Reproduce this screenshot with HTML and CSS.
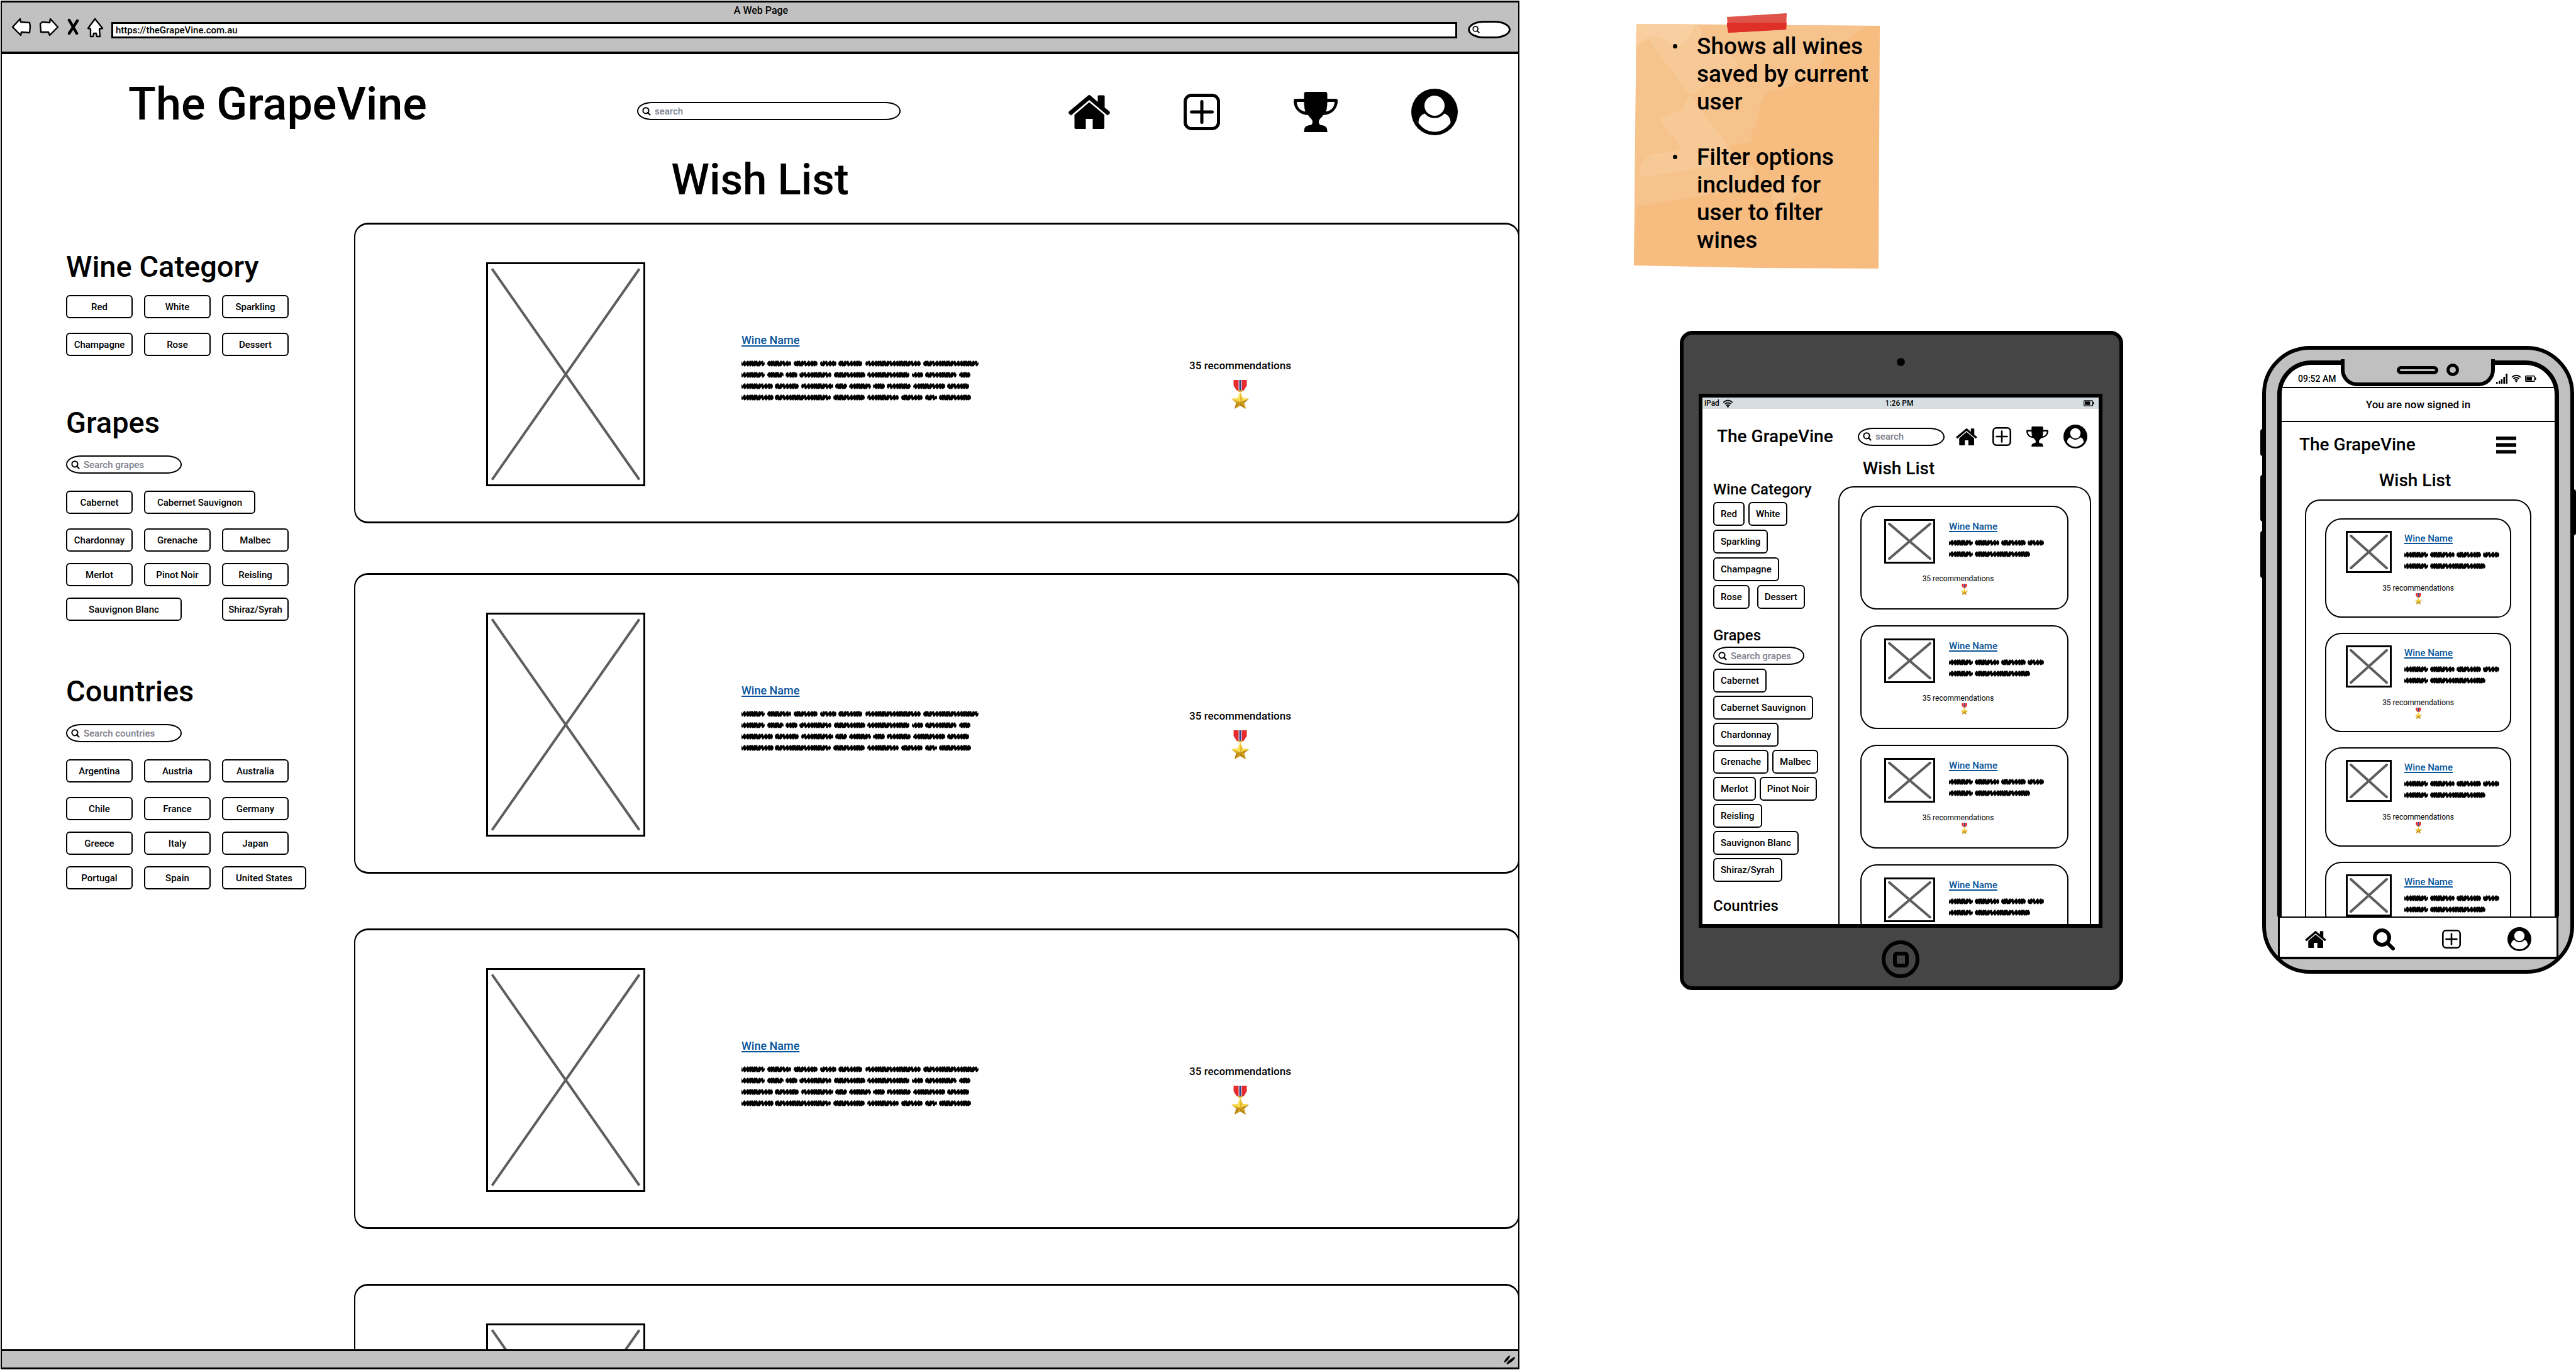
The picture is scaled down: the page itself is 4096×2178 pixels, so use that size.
FILE: index.html
```html
<!DOCTYPE html>
<html lang="en">
<head>
<meta charset="utf-8">
<title>The GrapeVine – Wish List</title>
<link rel="stylesheet" href="styles.css">
</head>
<body>
<svg class="sprite" aria-hidden="true">
  <defs>
    <pattern id="zigzag" width="34" height="18" patternUnits="userSpaceOnUse">
      <path d="M-6 12L-1 6 0 12 5 6 5 12 10 6 10 12 14 6 14 12 17 6 18 12 21 6 21 12 24 6 25 12 29 6 28 12 33 6 34 12 39 6" fill="none" stroke="#000" stroke-width="3.200" stroke-linejoin="round"/>
    </pattern>
    <linearGradient id="gold" x1="0" y1="0" x2="0" y2="1">
      <stop offset="0" stop-color="#f8d23a"/><stop offset="1" stop-color="#c8901a"/>
    </linearGradient>
  </defs>
  <symbol id="home" viewBox="0 0 66 54">
    <path d="M31 1q2-2 4 0l11.500 10V2q0-1.500 1.500-1.500h8q1.500 0 1.500 1.500V20L65 26q2 2 0 4l-3 2.500L33 8 4 32.500 1 30q-2-2 0-4z"/>
    <path d="M33 11.500L57 31.500V52q0 2-2 2H38.500V38h-11v16H11.500q-2 0-2-2V31.500z"/>
  </symbol>
  <symbol id="plus" viewBox="0 0 58 58">
    <rect x="2.500" y="2.500" width="53" height="53" rx="10" fill="none" stroke="#000" stroke-width="5"/>
    <path d="M29 12.500V45.500M12.500 29H45.500" stroke="#000" stroke-width="5" stroke-linecap="round"/>
  </symbol>
  <symbol id="trophy" viewBox="0 0 70 64">
    <path fill-rule="evenodd" d="M20 0H50q3.500 0 3.500 3.500V11H67q3 0 3 3C70 26 62 36 47 37 44 42 40 43 40 48q0 5 5 5 8.500 1 8.500 9v2h-37v-2q0-8 8.500-9 5 0 5-5C30 43 26 42 23 37 8 36 0 26 0 14q0-3 3-3H16.500V3.500Q16.500 0 20 0zM5 16C5 24 10 30 18.500 31.500 17 26 16.500 21 16.500 16zM65 16C65 24 60 30 51.500 31.500 53 26 53.500 21 53.500 16z"/>
  </symbol>
  <symbol id="user" viewBox="0 0 74 74">
    <circle cx="37" cy="37" r="37"/>
    <ellipse cx="37" cy="27" rx="16" ry="16" fill="#fff"/>
    <path fill="#fff" d="M21.500 39.500C14 42 11.500 48 11.500 54.500 18 63.500 27 68.500 37 68.500S56 63.500 62.500 54.500C62.500 48 60 42 52.500 39.500 48 44.500 43 46.800 37 46.800S26 44.500 21.500 39.500z"/>
  </symbol>
  <symbol id="search" viewBox="0 0 35 35">
    <circle cx="14.500" cy="14.500" r="11.500" fill="none" stroke="#000" stroke-width="6"/>
    <path d="M23 23L32 32" stroke="#000" stroke-width="6" stroke-linecap="round"/>
  </symbol>
  <symbol id="lens" viewBox="0 0 14 14">
    <circle cx="6" cy="5.800" r="4.600" fill="none" stroke="#000" stroke-width="2"/>
    <path d="M9 9L12.500 12.500" stroke="#000" stroke-width="2.200" stroke-linecap="round"/>
  </symbol>
  <symbol id="medal" viewBox="0 0 28 46">
    <path fill="#e52b2d" d="M3.500 0h21v9l-5 8h-11l-5-8z"/>
    <path fill="#fff" d="M11.500 0h5v17h-5z"/><path fill="#2b4a94" d="M12.500 0h3v17h-3z"/>
    <path fill="#d9a520" d="M9 16.500h10l-3 2.500h-4z"/>
    <path fill="url(#gold)" d="M14 18.500l4 10.500 10 1-7.500 6.500L23 46l-9-5-9 5 2.500-9.500L0 30l10-1z"/>
    <path fill="#a87412" opacity=".6" d="M14 35L23 46l-9-5zM14 35L5 46l2.500-9.500zM14 35l6.500 1.500L28 30z"/>
    <path fill="#ffe95c" opacity=".8" d="M14 35L0 30l10-1zM14 35l4-6 10 1zM14 18.500V35l-4-6z"/>
  </symbol>
  <symbol id="wifi" viewBox="0 0 18 14">
    <path d="M1 5.200Q9-2 17 5.200M3.800 8Q9 3.200 14.200 8M6.300 10.600Q9 8.200 11.700 10.600" fill="none" stroke="#000" stroke-width="2"/>
    <circle cx="9" cy="12.500" r="1.500"/>
  </symbol>
  <symbol id="battery" viewBox="0 0 18 10">
    <rect x=".7" y=".7" width="14.600" height="8.600" rx="1.200" fill="none" stroke="#000" stroke-width="1.400"/>
    <path d="M2.200 2.200h8.800v5.600H2.200zM15.500 2.500l2 1v3l-2 1z"/>
  </symbol>
  <symbol id="signal" viewBox="0 0 18 16">
    <path d="M0 13h2.500v3H0zM4 11.500h2.500V16H4zM7.700 9h2.500v7H7.700zM11.400 5h2.600v11h-2.600zM15.300 0H18v16h-2.700z"/>
  </symbol>
  <symbol id="cross" viewBox="0 0 100 100" preserveAspectRatio="none">
    <path d="M1 1L99 99M99 1L1 99" stroke="#5e5e5e" stroke-width="4" vector-effect="non-scaling-stroke"/>
  </symbol>
  <symbol id="blurb" viewBox="0 0 384 72">
    <path d="M4 9H32M46 9H74M88 9H116M130 9H146M159 9H187M202 9H280M294 9H372
             M4 27H32M46 27H62M75 27H84M97 27H138M152 27H192M205 27H262M276 27H284M297 27H337M351 27H359
             M4 45H45M58 45H86M100 45H141M154 45H163M176 45H201M214 45H223M236 45H264M278 45H319M332 45H357
             M4 63H46M58 63H137M151 63H191M205 63H245M259 63H283M297 63H306M319 63H360" fill="none" stroke="url(#zigzag)" stroke-width="10" stroke-linecap="round"/>
  </symbol>
  <symbol id="blurb-short" viewBox="0 0 154 36">
    <path d="M4 9H33M46 9H75M88 9H117M130 9H146M4 27H33M46 27H124" fill="none" stroke="url(#zigzag)" stroke-width="10" stroke-linecap="round"/>
  </symbol>
</svg>

<div class="board">

  <section class="window">
    <header class="chrome">
      <p class="chrome-title">A Web Page</p>
      <div class="toolbar">
        <svg width="32" height="30" viewBox="0 0 32 30"><path d="M2 15L14 2 15 7 29 8 30 14 29 24 16 23 15 28z" fill="#fff" stroke="#000" stroke-width="2.400" stroke-linejoin="round"/></svg>
        <svg width="32" height="30" viewBox="0 0 32 30"><path d="M30 15L18 2 17 8 5 7 2 10 3 23 15 23 17 28z" fill="#fff" stroke="#000" stroke-width="2.400" stroke-linejoin="round"/></svg>
        <svg width="20" height="30" viewBox="0 0 20 30"><path d="M4 4L16 25M17 5L4 25" stroke="#000" stroke-width="4.500" stroke-linecap="round"/></svg>
        <svg width="27" height="32" viewBox="0 0 27 32"><path d="M13 2L25 17 20 18 21 30 16 30 15 25 11 25 10 30 6 30 6 18 2 17z" fill="#fff" stroke="#000" stroke-width="2.400" stroke-linejoin="round"/></svg>
        <input class="url" type="text" value="https://theGrapeVine.com.au" aria-label="Address">
        <label class="quick"><svg width="12" height="12"><use href="#lens"/></svg><input type="search" aria-label="Quick search"></label>
      </div>
    </header>

    <div class="page">
      <header class="site-header">
        <a class="brand" href="#">The GrapeVine</a>
        <label class="search"><svg><use href="#lens"/></svg><input type="search" placeholder="search" aria-label="Search"></label>
        <nav class="site-nav">
          <a href="#" aria-label="Home"><svg width="66" height="54"><use href="#home"/></svg></a>
          <a href="#" aria-label="Add"><svg width="58" height="58"><use href="#plus"/></svg></a>
          <a href="#" aria-label="Top wines"><svg width="70" height="64"><use href="#trophy"/></svg></a>
          <a href="#" aria-label="Account"><svg width="74" height="74"><use href="#user"/></svg></a>
        </nav>
      </header>
      <h1>Wish List</h1>
      <div class="columns">
        <aside class="filters">
          <h2>Wine Category</h2>
          <div class="chip-grid">
            <button class="chip">Red</button><button class="chip">White</button><button class="chip">Sparkling</button>
            <button class="chip">Champagne</button><button class="chip">Rose</button><button class="chip">Dessert</button>
          </div>
          <h2 class="h-grapes">Grapes</h2>
          <label class="search"><svg><use href="#lens"/></svg><input type="search" placeholder="Search grapes" aria-label="Search grapes"></label>
          <div class="chip-grid">
            <button class="chip">Cabernet</button><button class="chip chip-l">Cabernet Sauvignon</button>
            <button class="chip">Chardonnay</button><button class="chip">Grenache</button><button class="chip">Malbec</button>
            <button class="chip">Merlot</button><button class="chip">Pinot Noir</button><button class="chip">Reisling</button>
            <button class="chip chip-xl">Sauvignon Blanc</button><button class="chip">Shiraz/Syrah</button>
          </div>
          <h2 class="h-countries">Countries</h2>
          <label class="search"><svg><use href="#lens"/></svg><input type="search" placeholder="Search countries" aria-label="Search countries"></label>
          <div class="chip-grid">
            <button class="chip">Argentina</button><button class="chip">Austria</button><button class="chip">Australia</button>
            <button class="chip">Chile</button><button class="chip">France</button><button class="chip">Germany</button>
            <button class="chip">Greece</button><button class="chip">Italy</button><button class="chip">Japan</button>
            <button class="chip">Portugal</button><button class="chip">Spain</button><button class="chip chip-m">United States</button>
          </div>
        </aside>
        <main class="wines">
          <article class="wine">
            <svg class="photo"><use href="#cross"/></svg>
            <div class="details"><a href="#">Wine Name</a><svg class="blurb"><use href="#blurb"/></svg></div>
            <div class="votes"><p>35 recommendations</p><svg class="medal"><use href="#medal"/></svg></div>
          </article>
          <article class="wine">
            <svg class="photo"><use href="#cross"/></svg>
            <div class="details"><a href="#">Wine Name</a><svg class="blurb"><use href="#blurb"/></svg></div>
            <div class="votes"><p>35 recommendations</p><svg class="medal"><use href="#medal"/></svg></div>
          </article>
          <article class="wine">
            <svg class="photo"><use href="#cross"/></svg>
            <div class="details"><a href="#">Wine Name</a><svg class="blurb"><use href="#blurb"/></svg></div>
            <div class="votes"><p>35 recommendations</p><svg class="medal"><use href="#medal"/></svg></div>
          </article>
          <article class="wine">
            <svg class="photo"><use href="#cross"/></svg>
          </article>
        </main>
      </div>
    </div>
    <footer class="grip"><svg width="24" height="18" viewBox="0 0 24 18"><path d="M2.500 13Q4 9 10 4 8 10 2.500 13zM6.500 16Q9 11 18 6.500 15 12 6.500 16z" stroke="#000" stroke-width="2" stroke-linejoin="round"/></svg></footer>
  </section>

  <div class="side">
    <aside class="note">
      <svg class="paper" viewBox="0 0 391 406">
        <path fill="#f6bc80" d="M4 17L391 20 389 406 200 405 0 401z"/>
        <path fill="#f7c48f" d="M4 17L368 20C358 30 340 36 339 46 330 52 306 60 300 75 290 95 262 118 218 123 190 140 205 172 188 187 184 197 188 205 188 205 170 206 145 210 142 217 144 227 170 230 190 245 196 258 188 262 182 264 186 272 178 278 174 280L4 307 0 401z" opacity=".85"/>
        <path fill="#f8ce9f" d="M4 17L100 18C110 26 108 34 108 36 112 60 164 58 165 82 165 92 128 88 118 108 100 132 82 124 82 148 80 158 42 160 42 172 50 186 74 204 74 214 68 224 40 220 28 224 6 240 6 258 14 258 40 262 100 242 172 241 190 252 192 260L4 290z" opacity=".55"/>
        <path fill="#fad4aa" d="M4 17L96 18C90 34 82 54 66 52 52 46 40 34 30 37 20 38 10 50 4 52z" opacity=".6"/>
        <path fill="#f8c793" d="M232 260C250 252 268 262 268 274 266 290 246 296 236 315 224 318 218 300 220 282 222 270 224 264 232 260z" opacity=".7"/>
        <path fill="#df544a" d="M148 6L243 0 242 26 150 31z"/>
        <path fill="#de3027" d="M148 15H243L242 26 150 31 148 20z"/>
      </svg>
      <ul>
        <li>Shows all wines<br>saved by current<br>user</li>
        <li>Filter options<br>included for<br>user to filter<br>wines</li>
      </ul>
    </aside>

    <div class="devices">
      <section class="tablet">
        <div class="camera"></div>
        <div class="tablet-screen">
          <div class="tablet-status">
            <span>iPad <svg width="17" height="13"><use href="#wifi"/></svg></span>
            <span>1:26 PM</span>
            <span><svg width="17" height="10"><use href="#battery"/></svg></span>
          </div>
          <header class="tablet-header">
            <a class="brand" href="#">The GrapeVine</a>
            <label class="search"><svg><use href="#lens"/></svg><input type="search" placeholder="search" aria-label="Search"></label>
            <nav>
              <a href="#" aria-label="Home"><svg width="34" height="27"><use href="#home"/></svg></a>
              <a href="#" aria-label="Add"><svg width="30" height="30"><use href="#plus"/></svg></a>
              <a href="#" aria-label="Top wines"><svg width="35" height="32"><use href="#trophy"/></svg></a>
              <a href="#" aria-label="Account"><svg width="38" height="38"><use href="#user"/></svg></a>
            </nav>
          </header>
          <h2>Wish List</h2>
          <div class="tablet-columns">
            <aside class="tablet-filters">
              <h3>Wine Category</h3>
              <div class="chip-rows chip-rows-loose">
                <div><button class="chip">Red</button><button class="chip">White</button></div>
                <div><button class="chip">Sparkling</button></div>
                <div><button class="chip">Champagne</button></div>
                <div><button class="chip">Rose</button><button class="chip">Dessert</button></div>
              </div>
              <h3 class="h-grapes">Grapes</h3>
              <label class="search"><svg><use href="#lens"/></svg><input type="search" placeholder="Search grapes" aria-label="Search grapes"></label>
              <div class="chip-rows">
                <div><button class="chip">Cabernet</button></div>
                <div><button class="chip">Cabernet Sauvignon</button></div>
                <div><button class="chip">Chardonnay</button></div>
                <div><button class="chip">Grenache</button><button class="chip">Malbec</button></div>
                <div><button class="chip">Merlot</button><button class="chip">Pinot Noir</button></div>
                <div><button class="chip">Reisling</button></div>
                <div><button class="chip">Sauvignon Blanc</button></div>
                <div><button class="chip">Shiraz/Syrah</button></div>
              </div>
              <h3 class="h-countries">Countries</h3>
            </aside>
            <main class="stack">
              <article class="tile"><svg class="thumb"><use href="#cross"/></svg><div class="info"><a href="#">Wine Name</a><svg class="blurb-short"><use href="#blurb-short"/></svg></div><div class="tally"><p>35 recommendations</p><svg class="medal-small"><use href="#medal"/></svg></div></article>
              <article class="tile"><svg class="thumb"><use href="#cross"/></svg><div class="info"><a href="#">Wine Name</a><svg class="blurb-short"><use href="#blurb-short"/></svg></div><div class="tally"><p>35 recommendations</p><svg class="medal-small"><use href="#medal"/></svg></div></article>
              <article class="tile"><svg class="thumb"><use href="#cross"/></svg><div class="info"><a href="#">Wine Name</a><svg class="blurb-short"><use href="#blurb-short"/></svg></div><div class="tally"><p>35 recommendations</p><svg class="medal-small"><use href="#medal"/></svg></div></article>
              <article class="tile"><svg class="thumb"><use href="#cross"/></svg><div class="info"><a href="#">Wine Name</a><svg class="blurb-short"><use href="#blurb-short"/></svg></div></article>
            </main>
          </div>
        </div>
        <button class="home-key" aria-label="Home"></button>
      </section>

      <section class="phone">
        <i class="key key-mute"></i><i class="key key-up"></i><i class="key key-down"></i><i class="key key-power"></i>
        <div class="notch"><span class="speaker"></span><span class="lens"></span></div>
        <div class="phone-screen">
          <div class="phone-status">
            <span>09:52 AM</span>
            <span class="phone-signals"><svg width="18" height="16"><use href="#signal"/></svg><svg width="16" height="13"><use href="#wifi"/></svg><svg width="18" height="10"><use href="#battery"/></svg></span>
          </div>
          <p class="flash">You are now signed in</p>
          <header class="phone-header">
            <a class="brand" href="#">The GrapeVine</a>
            <button class="menu" aria-label="Menu"><svg width="32" height="27" viewBox="0 0 32 27"><path d="M0 0h32v5H0zM0 11h32v5H0zM0 22h32v5H0z" stroke="#000" stroke-linejoin="round"/></svg></button>
          </header>
          <h2>Wish List</h2>
          <main class="stack">
            <article class="tile"><svg class="thumb"><use href="#cross"/></svg><div class="info"><a href="#">Wine Name</a><svg class="blurb-short"><use href="#blurb-short"/></svg></div><div class="tally"><p>35 recommendations</p><svg class="medal-small"><use href="#medal"/></svg></div></article>
            <article class="tile"><svg class="thumb"><use href="#cross"/></svg><div class="info"><a href="#">Wine Name</a><svg class="blurb-short"><use href="#blurb-short"/></svg></div><div class="tally"><p>35 recommendations</p><svg class="medal-small"><use href="#medal"/></svg></div></article>
            <article class="tile"><svg class="thumb"><use href="#cross"/></svg><div class="info"><a href="#">Wine Name</a><svg class="blurb-short"><use href="#blurb-short"/></svg></div><div class="tally"><p>35 recommendations</p><svg class="medal-small"><use href="#medal"/></svg></div></article>
            <article class="tile"><svg class="thumb"><use href="#cross"/></svg><div class="info"><a href="#">Wine Name</a><svg class="blurb-short"><use href="#blurb-short"/></svg></div></article>
          </main>
        </div>
        <nav class="tabs">
          <a href="#" aria-label="Home"><svg width="34" height="27"><use href="#home"/></svg></a>
          <a href="#" aria-label="Search"><svg width="35" height="35"><use href="#search"/></svg></a>
          <a href="#" aria-label="Add"><svg width="30" height="30"><use href="#plus"/></svg></a>
          <a href="#" aria-label="Account"><svg width="38" height="38"><use href="#user"/></svg></a>
        </nav>
      </section>
    </div>
  </div>
</div>
</body>
</html>
```

FILE: styles.css
```css
*, *::before, *::after { box-sizing: border-box; }

body {
  margin: 0;
  background: #fff;
  color: #000;
  font-family: Roboto, "Noto Sans", sans-serif;
  font-size: 15px;
  font-weight: 500;
}

h1, h2, h3, p, ul { margin: 0; padding: 0; font-weight: 500; }
svg { display: block; flex: none; }
a { color: inherit; text-decoration: none; }
button, input { font: inherit; color: inherit; }
input { min-width: 0; border: 0; outline: 0; padding: 0; background: none; appearance: none; }
input::placeholder { color: #80808c; opacity: 1; }
.sprite { position: absolute; width: 0; height: 0; }

.board {
  display: grid;
  grid-template-columns: minmax(0, 1fr) 1680px;
  height: 100vh;
  overflow: hidden;
}

/* Shared controls */
.chip {
  height: 37px;
  padding: 0 10px;
  border: 2px solid #000;
  border-radius: 6px;
  background: #fff;
  font-size: 15px;
  line-height: 20px;
  white-space: nowrap;
}
.search {
  display: flex;
  align-items: center;
  gap: 6px;
  height: 29px;
  padding: 0 4px 0 6px;
  border: 2px solid #000;
  border-radius: 24px / 14px;
  background: #fff;
}
.search svg { width: 14px; height: 14px; }
.search input { flex: 1; height: 20px; }

/* Desktop browser */
.window {
  display: flex;
  flex-direction: column;
  min-height: 0;
  margin: 1px 0 1px 1px;
  border: 2px solid #000;
  border-width: 3px 2px;
}
.chrome {
  padding: 2px 12px 21px 15px;
  border-bottom: 4px solid #000;
  background: #c1c1c1;
}
.chrome-title { text-align: center; font-size: 16px; line-height: 22px; }
.toolbar { display: flex; align-items: flex-start; gap: 12px; height: 33px; }
.url {
  flex: 1;
  height: 26px;
  margin-top: 7px;
  padding: 0 4px;
  border: 3px solid #000;
  background: #fff;
}
.quick {
  display: flex;
  align-items: center;
  width: 68px;
  height: 28px;
  margin: 5px 0 0 5px;
  padding-left: 4px;
  border: 3px solid #000;
  border-radius: 26px / 14px;
  background: #fff;
}
.quick input { width: 30px; }

.page { flex: 1; min-height: 0; overflow-y: clip; }
.site-header {
  display: flex;
  align-items: flex-end;
  height: 129px;
  padding: 42px 96px 0 201px;
}
.brand { white-space: nowrap; }
.site-header .brand {
  flex: 0 0 809px;
  align-self: flex-start;
  font-size: 72px;
  line-height: 75px;
}
.site-header .search { width: 419px; margin-bottom: 24px; }
.site-nav {
  display: flex;
  align-items: center;
  gap: 117px;
  height: 74px;
  margin-left: auto;
}
h1 {
  margin: 34px 0 33px;
  text-align: center;
  font-size: 69px;
  line-height: 74px;
  height: 72px;
}
.columns { display: grid; grid-template-columns: 458px minmax(0, 1fr); padding-left: 102px; }

.filters { padding-top: 42px; }
.filters h2 { font-size: 47px; line-height: 56px; margin-bottom: 17px; }
.filters .h-grapes { margin: 78px 0 24px; }
.filters .h-countries { margin: 84px 0 24px; }
.filters .search { width: 184px; margin-bottom: 27px; }
.chip-grid {
  display: grid;
  grid-template-columns: repeat(3, 106px);
  grid-template-rows: 42px;
  grid-auto-rows: 37px;
  gap: 18px;
}
.chip-grid .chip { padding: 0; }
.chip-grid .chip-l { grid-column: span 2; width: 177px; }
.chip-grid .chip-xl { grid-column: span 2; width: 184px; }
.chip-grid .chip-m { width: 134px; }

.wines { margin-right: -2px; }
.wine {
  display: grid;
  grid-template-columns: 253px 384px minmax(0, 1fr);
  column-gap: 153px;
  margin-bottom: 87px;
  padding: 60px 186px 56px 208px;
  border: 3px solid #000;
  border-width: 3px 2px;
  border-radius: 22px;
  background: #fff;
}
.wine:first-child { margin-bottom: 79px; }
.photo { width: 253px; height: 356px; padding: 4px; border: 3px solid #000; }
.details { padding-top: 112px; }
.details a, .info a { color: #07549a; text-decoration: underline; text-decoration-thickness: 2px; text-underline-offset: 2px; }
.details a { display: block; font-size: 18px; line-height: 24px; margin-bottom: 16px; }
.blurb { width: 384px; height: 72px; }
.votes { padding-top: 152px; text-align: center; font-size: 17px; line-height: 24px; }
.medal { width: 28px; height: 46px; margin: 11px auto 0; }

.grip {
  display: flex;
  justify-content: flex-end;
  align-items: center;
  height: 29px;
  border-top: 3px solid #000;
  background: #c1c1c1;
}

/* Sticky note */
.side { display: flex; flex-direction: column; }
.note {
  position: relative;
  width: 391px;
  height: 406px;
  margin: 21px 0 0 182px;
}
.paper { position: absolute; inset: 0; width: 100%; height: 100%; }
.note ul { position: relative; padding: 31px 0 0 100px; font-size: 37px; line-height: 44px; list-style: none; white-space: nowrap; }
.note li + li { margin-top: 44px; }
.note li::before {
  content: "";
  position: absolute;
  left: 62px;
  width: 7px;
  height: 7px;
  margin-top: 18px;
  border-radius: 50%;
  background: #000;
}

.devices { display: flex; align-items: flex-start; justify-content: space-between; margin: 99px 3px 0 255px; }

/* Wine tiles on the small screens */
.stack {
  display: flex;
  flex-direction: column;
  border: 2px solid #000;
  border-bottom: 0;
  border-radius: 24px 26px 0 0;
}
.tile {
  display: grid;
  border: 2px solid #000;
  border-radius: 26px 24px 22px 26px;
}
.thumb { width: 100%; height: 100%; padding: 3px; border: 3px solid #000; }
.info { padding-top: 2px; }
.info a { display: block; font-size: 15px; line-height: 20px; }
.blurb-short { width: 154px; height: 36px; margin-top: 7px; }
.tally { grid-column: 1 / -1; text-align: center; font-size: 12px; font-weight: 400; line-height: 16px; padding-top: 16px; }
.tally p { font-weight: 400; }
.medal-small { width: 11px; height: 18px; margin: 0 auto; }

/* Tablet */
.tablet {
  display: flex;
  flex-direction: column;
  width: 705px;
  height: 1048px;
  padding: 0 27px 0 24px;
  border: 6px solid #000;
  border-radius: 20px;
  background: #454545;
}
.camera { width: 13px; height: 13px; margin: 37px auto 44px; border-radius: 50%; background: #000; }
.tablet-screen {
  height: 849px;
  border: 6px solid #000;
  background: #fff;
  overflow: hidden;
}
.tablet-status {
  display: grid;
  grid-template-columns: 1fr auto 1fr;
  align-items: center;
  height: 18px;
  padding: 0 7px 0 3px;
  background: #d6dee1;
  font-size: 12px;
  line-height: 16px;
}
.tablet-status span { display: flex; align-items: center; gap: 5px; }
.tablet-status span:last-child { justify-content: flex-end; }
.tablet-header {
  display: flex;
  align-items: center;
  height: 63px;
  padding: 25px 18px 0 23px;
}
.tablet-header .brand { flex: 0 0 224px; font-size: 28px; line-height: 34px; }
.tablet-header .search { width: 138px; }
.tablet-header nav { display: flex; align-items: center; gap: 24px; margin-left: auto; }
.tablet-screen h2, .phone-screen h2 { text-align: center; font-size: 28px; line-height: 32px; }
.tablet-screen h2 { margin: 16px 6px 3px 0; }
.tablet-columns { display: grid; grid-template-columns: 199px minmax(0, 1fr); padding: 0 12px 0 17px; }
.tablet-filters h3 { font-size: 24px; line-height: 28px; margin-bottom: 6px; }
.tablet-filters .h-grapes { margin: 28px 0 4px; }
.tablet-filters .h-countries { margin-top: 24px; }
.tablet-filters .search { width: 145px; margin-bottom: 6px; }
.chip-rows { display: flex; flex-direction: column; gap: 5px; }
.chip-rows-loose { gap: 6px; }
.chip-rows > div { display: flex; gap: 6px; }
.chip-rows .chip { height: 38px; }
.chip-rows-loose > div:last-child { gap: 12px; }
.tablet .stack { margin-top: 9px; padding: 29px 34px 0 33px; gap: 25px; height: 900px; }
.tablet .tile { grid-template-columns: 81px 1fr; grid-template-rows: 71px; column-gap: 22px; padding: 19px 0 21px 36px; }
.tablet .tally { margin-right: 36px; }
.tablet .tally p { padding-right: 20px; }
.home-key {
  display: grid;
  place-items: center;
  width: 60px;
  height: 60px;
  margin: 20px auto 0;
  padding: 0;
  border: 6px solid #000;
  border-radius: 50%;
  background: none;
}
.home-key::before { content: ""; width: 25px; height: 25px; border: 6px solid #000; border-radius: 6px; }

/* Phone */
.phone {
  position: relative;
  width: 496px;
  margin-top: 24px;
  padding: 17px 18px;
  border: 6px solid #000;
  border-radius: 76px;
  background: #c0c0c0;
}
.key { position: absolute; left: -9px; width: 8px; border-radius: 4px 0 0 4px; background: #000; }
.key-mute { top: 126px; height: 43px; }
.key-up { top: 199px; height: 74px; }
.key-down { top: 288px; height: 75px; }
.key-power { left: auto; right: -9px; top: 222px; height: 73px; border-radius: 0 4px 4px 0; }
.notch {
  position: absolute;
  top: 15px;
  left: 119px;
  z-index: 1;
  display: flex;
  justify-content: flex-end;
  gap: 13px;
  width: 245px;
  height: 43px;
  padding: 11px 51px 0 0;
  border: 6px solid #000;
  border-top: 0;
  border-radius: 0 0 26px 26px;
  background: #c0c0c0;
}
.speaker { width: 66px; height: 13px; border: 5px solid #000; border-radius: 7px; }
.lens { width: 20px; height: 20px; margin-top: -4px; border: 5px solid #000; border-radius: 50%; }
.phone-screen {
  height: 884px;
  border: 7px solid #000;
  border-bottom: 0;
  border-radius: 54px 54px 0 0;
  background: #fff;
  overflow: hidden;
}
.phone-status {
  display: flex;
  align-items: center;
  justify-content: space-between;
  height: 35px;
  padding: 8px 29px 0 26px;
  font-size: 14px;
  line-height: 16px;
}
.phone-signals { display: flex; align-items: center; gap: 6px; }
.flash {
  border: solid #000;
  border-width: 2px 0;
  text-align: center;
  font-size: 17px;
  line-height: 52px;
}
.phone-header {
  display: flex;
  align-items: center;
  justify-content: space-between;
  padding: 19px 61px 0 28px;
}
.phone-header .brand { font-size: 28px; line-height: 34px; }
.menu { padding: 0; border: 0; background: none; }
.phone-screen h2 { margin: 24px 10px 14px 0; }
.phone .stack { height: 800px; margin: 0 37px; padding: 28px 30px 0; gap: 24px; }
.phone .tile { grid-template-columns: 73px 1fr; grid-template-rows: 67px; column-gap: 20px; padding: 18px 0 19px 31px; }
.phone .tally { margin-right: 31px; }
.tabs {
  display: flex;
  align-items: center;
  justify-content: space-between;
  height: 68px;
  margin: 0 1px;
  padding: 6px 40px 0 40px;
  border: solid #000;
  border-width: 2px 3px 4px;
  background: #fff;
}
```
